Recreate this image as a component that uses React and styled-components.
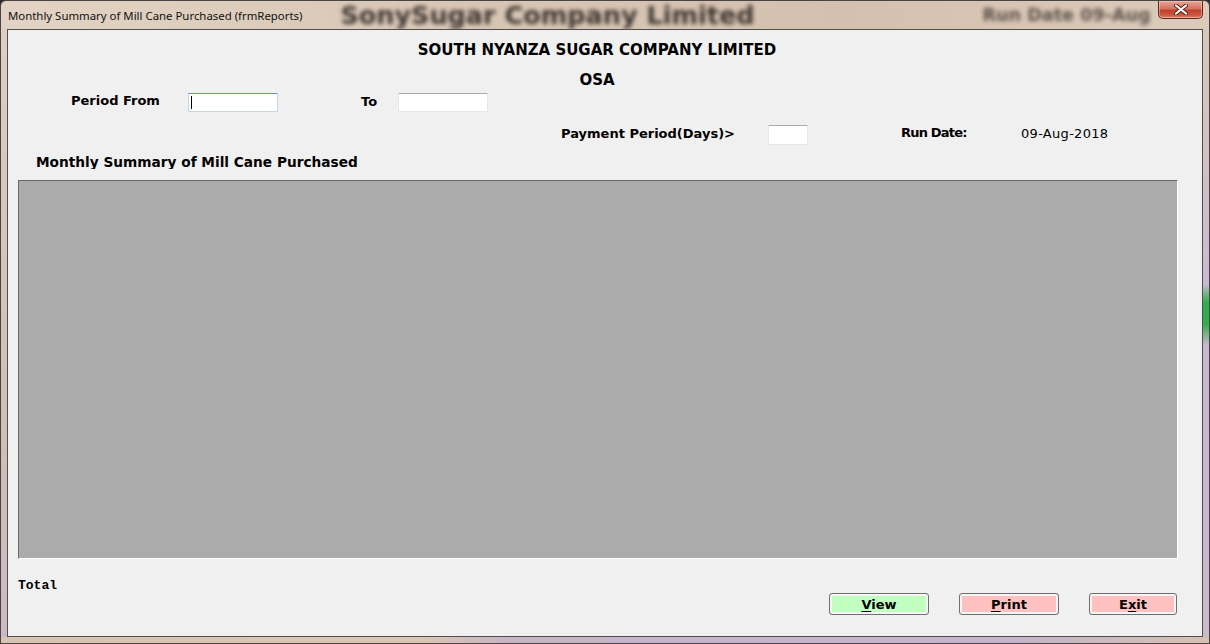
import React from "react";
import styled, { createGlobalStyle } from "styled-components";

const GlobalStyle = createGlobalStyle`
  html, body {
    margin: 0;
    padding: 0;
    background: #2b2b2b;
  }
  body {
    font-family: "DejaVu Sans", Verdana, sans-serif;
  }
`;

const Window = styled.div`
  width: 1210px;
  height: 644px;
  box-sizing: border-box;
  border: 1px solid #4a4446;
  border-radius: 6px 6px 0 0;
  display: flex;
  flex-direction: column;
  overflow: hidden;
  background: linear-gradient(to right, #e2d3c4 0%, #d8c6b4 40%, #d4c0ae 70%, #dccbbb 100%);
`;

const TitleBar = styled.div`
  height: 28px;
  display: flex;
  align-items: center;
  position: relative;
  overflow: hidden;
  flex-shrink: 0;
`;

const TitleText = styled.span`
  font-family: "Noto Sans", "Open Sans", sans-serif;
  font-size: 11.4px;
  color: #111;
  margin-left: 7px;
  margin-top: 1px;
  white-space: nowrap;
`;

const GhostText = styled.span`
  font-family: "DejaVu Sans", sans-serif;
  font-weight: bold;
  white-space: nowrap;
  color: #3d3631;
  filter: blur(${(p) => p.blur || 2}px);
  font-size: ${(p) => p.size}px;
  margin-left: ${(p) => p.gap}px;
  opacity: ${(p) => p.fade || 1};
`;

const CloseButton = styled.div`
  position: absolute;
  right: 6px;
  top: 0;
  width: 45px;
  height: 18px;
  box-sizing: border-box;
  border: 1px solid #5b2a22;
  border-top: none;
  border-radius: 0 0 5px 5px;
  background: linear-gradient(to bottom, #e7a597 0%, #d5735f 45%, #c0402c 55%, #cd5a44 85%, #e0866e 100%);
  display: flex;
  align-items: center;
  justify-content: center;
  box-shadow: inset 0 0 0 1px rgba(255, 220, 210, 0.45);
`;

const Body = styled.div`
  flex: 1;
  display: flex;
  min-height: 0;
`;

const FrameSide = styled.div`
  width: 6px;
  flex-shrink: 0;
  background: ${(p) =>
    p.right
      ? "linear-gradient(to bottom, #d9c7b7 0%, #cdbbcf 38%, #c8b8d0 42%, #2fae4c 45%, #2fae4c 48.5%, #c8b8d0 52%, #cbb9cd 100%)"
      : "linear-gradient(to bottom, #dfcfc0 0%, #d2c0b2 60%, #cdb9c4 100%)"};
`;

const BottomFrame = styled.div`
  height: 6px;
  flex-shrink: 0;
  background: linear-gradient(to right, #d8c4b2 0%, #dac6b4 35%, #c9b3c6 42%, #c7b5cc 70%, #c8b4c8 85%, #d6c2b2 100%);
`;

const Client = styled.div`
  flex: 1;
  border: 1px solid #4f4f4f;
  background: #f0f0f0;
  display: flex;
  flex-direction: column;
  color: #000;
`;

const Heading = styled.div`
  font-weight: bold;
  font-size: 15px;
  line-height: 18px;
  text-align: center;
  padding-right: 16px;
  margin-top: ${(p) => p.top}px;
`;

const FieldRow = styled.div`
  display: flex;
  align-items: center;
  height: ${(p) => p.h}px;
  margin-top: ${(p) => p.top}px;
`;

const Label = styled.span`
  font-weight: ${(p) => (p.plain ? "normal" : "bold")};
  font-size: 13px;
  line-height: 16px;
  letter-spacing: ${(p) => p.track || 0}px;
  white-space: nowrap;
  position: relative;
  top: ${(p) => p.shift || 0}px;
  margin-left: ${(p) => p.left}px;
  width: ${(p) => p.w}px;
  flex-shrink: 0;
`;

const TextBox = styled.div`
  box-sizing: border-box;
  width: ${(p) => p.w}px;
  height: ${(p) => p.h}px;
  background: #fff;
  flex-shrink: 0;
  border: 1px solid ${(p) => (p.focused ? "#c5d6ea" : "#e6e6e6")};
  border-top-color: ${(p) => (p.focused ? "#6b8fc2" : "#ababab")};
  display: flex;
  align-items: center;
  padding-left: 2px;
`;

const Caret = styled.span`
  width: 1px;
  height: 13px;
  background: #000;
`;

const SubTitle = styled.div`
  font-weight: bold;
  font-size: 13.7px;
  line-height: 16px;
  height: 15px;
  overflow: hidden;
  margin-top: 9px;
  margin-left: 28px;
  white-space: nowrap;
`;

const Grid = styled.div`
  box-sizing: border-box;
  width: 1160px;
  height: 379px;
  margin-top: 11px;
  margin-left: 10px;
  background: #ababab;
  border-top: 1px solid #6b6b6b;
  border-left: 1px solid #6b6b6b;
  border-right: 1px solid #ffffff;
  border-bottom: 1px solid #ffffff;
`;

const TotalLabel = styled.div`
  font-family: "Liberation Mono", "Courier New", monospace;
  font-weight: bold;
  font-size: 13px;
  line-height: 14px;
  margin-top: 20px;
  margin-left: 10px;
`;

const ButtonRow = styled.div`
  display: flex;
  justify-content: flex-end;
  gap: 30px;
  padding-right: 25px;
  margin-top: 0;
`;

const Button = styled.button`
  box-sizing: border-box;
  width: ${(p) => p.w}px;
  height: 22px;
  padding: 0;
  border: 1px solid #707070;
  border-radius: 3px;
  background: ${(p) => p.bg};
  box-shadow: inset 0 0 0 2px #f4f4f4;
  font-family: "DejaVu Sans", Verdana, sans-serif;
  font-weight: bold;
  font-size: 13px;
  color: #000;
  display: flex;
  align-items: center;
  justify-content: center;
  cursor: default;
`;

const AccessKey = styled.span`
  text-decoration: underline;
  text-underline-offset: 2px;
`;

const CloseGlyph = () => (
  <svg width="14" height="11" viewBox="0 0 14 11">
    <path d="M2 1.5 L12 9.5 M12 1.5 L2 9.5" stroke="#5a2018" strokeWidth="4" strokeLinecap="round" />
    <path d="M2 1.5 L12 9.5 M12 1.5 L2 9.5" stroke="#ffffff" strokeWidth="2.2" strokeLinecap="round" />
  </svg>
);

const App = () => {
  return (
    <>
      <GlobalStyle />
      <Window>
        <TitleBar>
          <TitleText>Monthly Summary of Mill Cane Purchased (frmReports)</TitleText>
          <GhostText size={25.5} gap={38} blur={2.2}>SonySugar Company Limited</GhostText>
          <GhostText size={17.6} gap={228} blur={2.3} fade={0.8}>Run Date 09-Aug</GhostText>
          <CloseButton>
            <CloseGlyph />
          </CloseButton>
        </TitleBar>
        <Body>
          <FrameSide />
          <Client>
            <Heading top={11}>SOUTH NYANZA SUGAR COMPANY LIMITED</Heading>
            <Heading top={12}>OSA</Heading>
            <FieldRow h={19} top={4}>
              <Label left={63} w={117} shift={-2}>Period From</Label>
              <TextBox w={90} h={19} focused>
                <Caret />
              </TextBox>
              <Label left={83} w={37} shift={-1}>To</Label>
              <TextBox w={90} h={19} />
            </FieldRow>
            <FieldRow h={20} top={13}>
              <Label left={553} w={207} shift={-1}>Payment Period(Days)&gt;</Label>
              <TextBox w={40} h={20} />
              <Label left={93} w={120} shift={-2} track={-0.8}>Run Date:</Label>
              <Label plain shift={-1} track={0.3}>09-Aug-2018</Label>
            </FieldRow>
            <SubTitle>Monthly Summary of Mill Cane Purchased</SubTitle>
            <Grid />
            <TotalLabel>Total</TotalLabel>
            <ButtonRow>
              <Button w={100} bg="#c0ffc0">
                <span>
                  <AccessKey>V</AccessKey>iew
                </span>
              </Button>
              <Button w={100} bg="#ffc0c0">
                <span>
                  <AccessKey>P</AccessKey>rint
                </span>
              </Button>
              <Button w={88} bg="#ffc0c0">
                <span>
                  E<AccessKey>x</AccessKey>it
                </span>
              </Button>
            </ButtonRow>
          </Client>
          <FrameSide right />
        </Body>
        <BottomFrame />
      </Window>
    </>
  );
};

export default App;
